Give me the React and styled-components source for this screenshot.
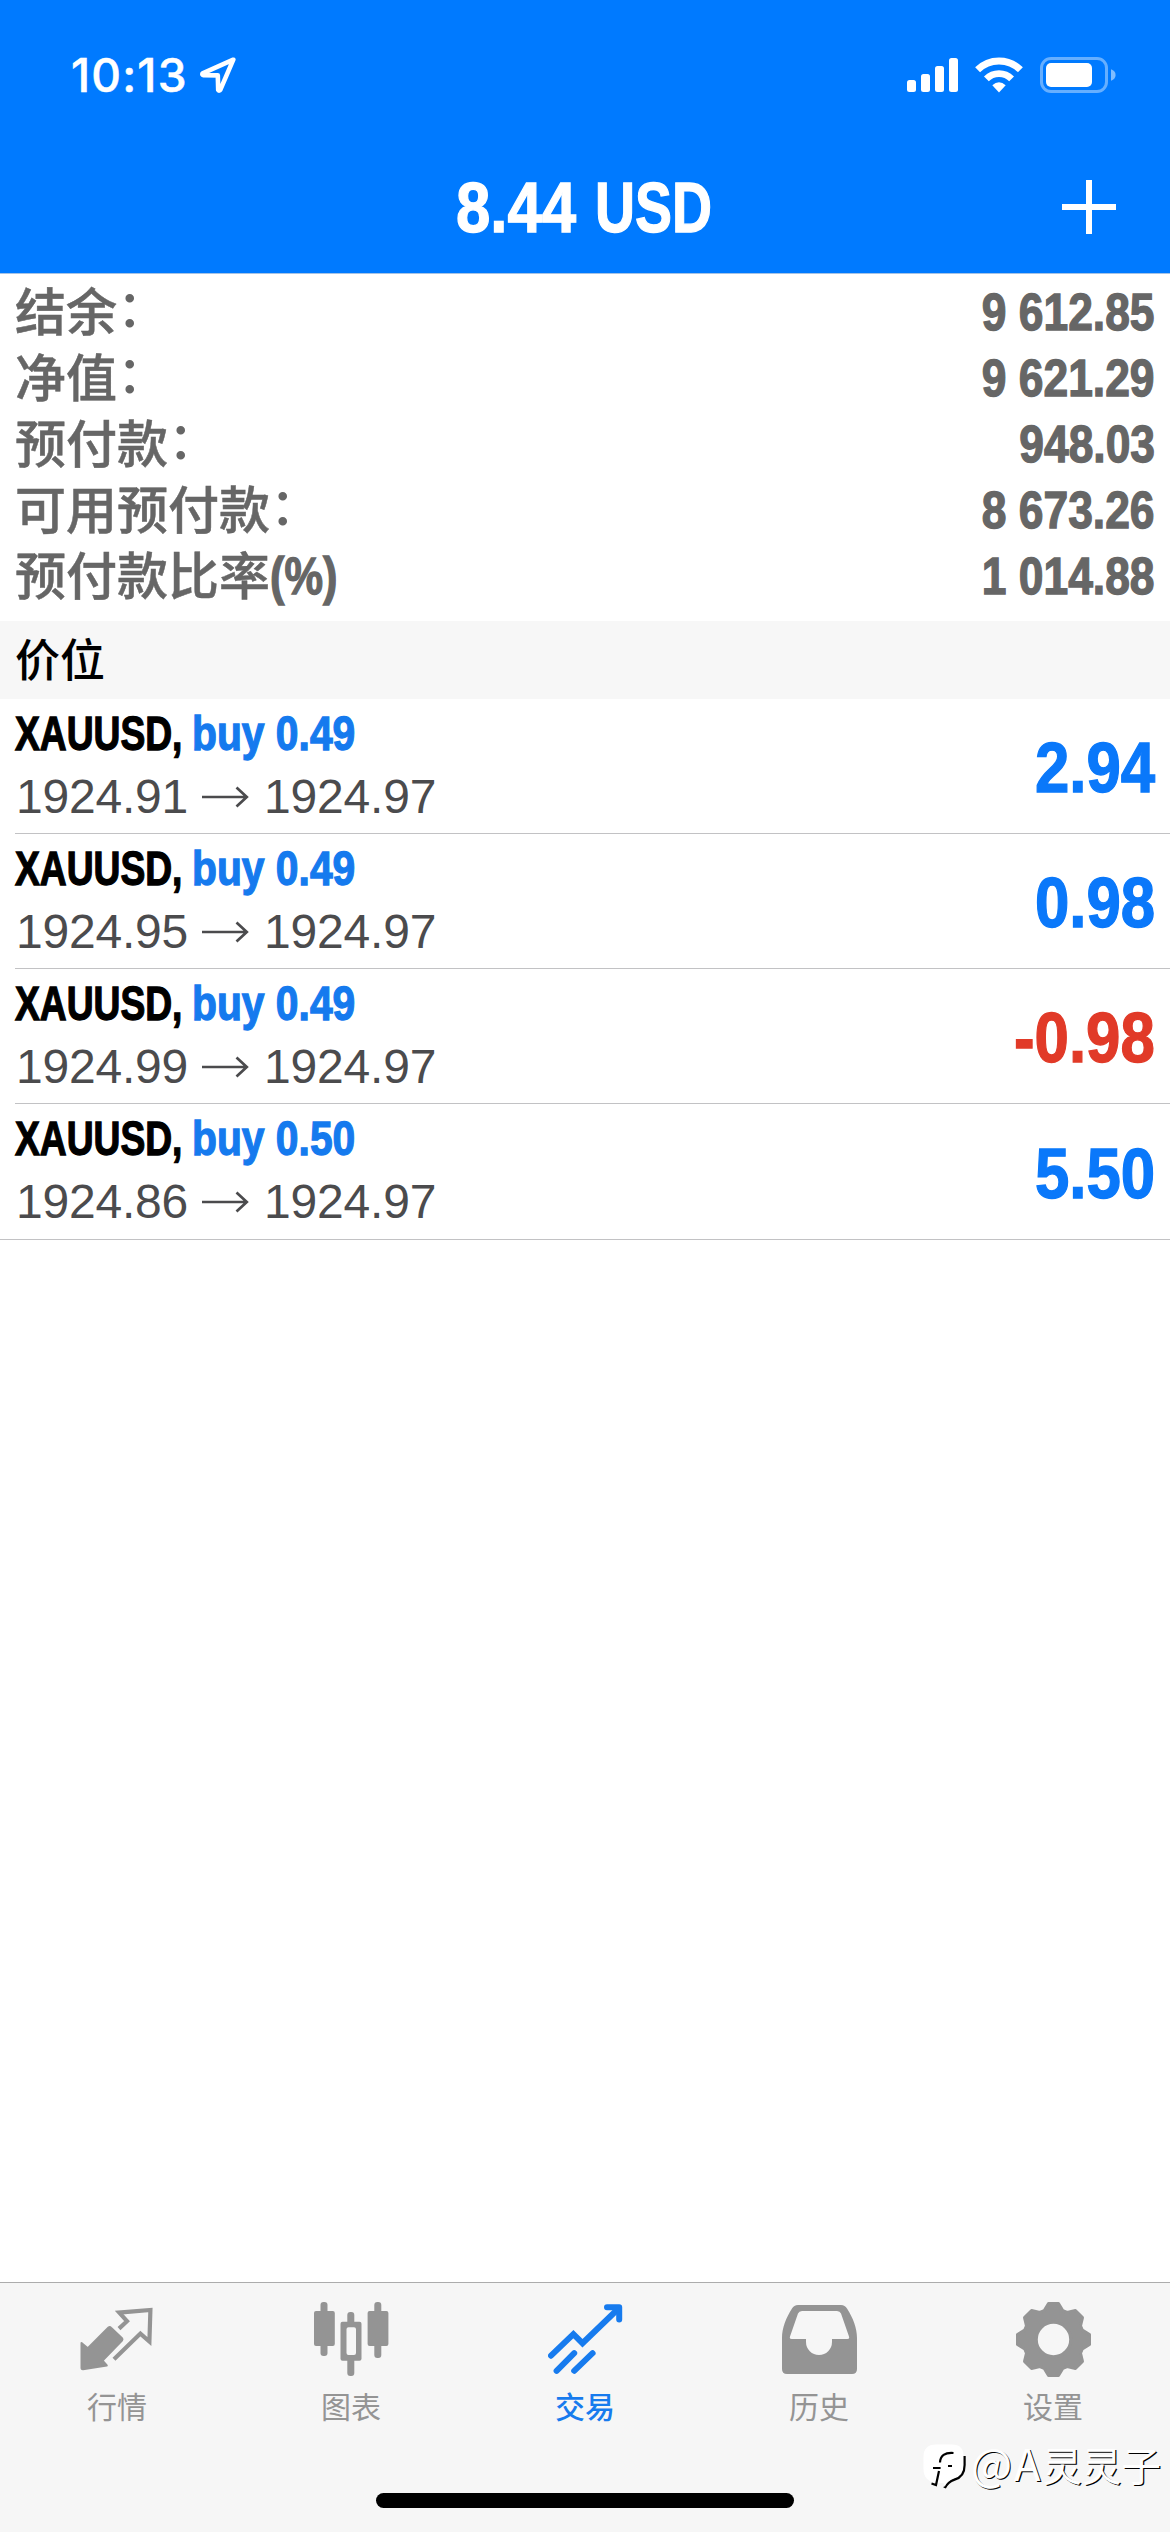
import React from 'react';
import styled, { createGlobalStyle } from 'styled-components';

const BLUE = '#007aff';
const CJK = '"Noto Sans CJK SC", "Noto Sans", sans-serif';
const LATIN = '"Liberation Sans", Arial, sans-serif';

const GlobalStyle = createGlobalStyle`
  * { box-sizing: border-box; }
  body { margin: 0; background: #fff; }
`;

const Screen = styled.div`
  position: relative;
  display: flex;
  flex-direction: column;
  width: 1170px;
  height: 2532px;
  overflow: hidden;
  background: #fff;
  font-family: ${LATIN};
`;

const Header = styled.header`
  background: ${BLUE};
  border-bottom: 1px solid #a5c3e6;
`;

const StatusBar = styled.div`
  display: flex;
  align-items: center;
  justify-content: space-between;
  height: 141px;
  padding: 8px 54px 0 71px;
`;

const StatusGroup = styled.div`
  display: flex;
  align-items: center;
  gap: ${(p) => p.$gap}px;
`;

const Clock = styled.span`
  width: 113px;
  color: #fff;
  font: 500 46px/50px Inter, sans-serif;
  letter-spacing: 1.2px;
  white-space: nowrap;
  -webkit-text-stroke: 0.5px currentColor;
`;

const NavBar = styled.div`
  display: grid;
  grid-template-columns: 1fr auto 1fr;
  align-items: center;
  height: 132px;
  padding-right: 54px;
  padding-left: 52px;
`;

const Title = styled.h1`
  display: flex;
  grid-column: 2;
  margin: 0;
  color: #fff;
  font-size: 71px;
  line-height: 80px;
`;

const AddButton = styled.button`
  display: flex;
  justify-self: end;
  padding: 0;
  border: 0;
  background: none;
`;

const Condensed = styled.span`
  display: inline-block;
  width: ${(p) => (p.$width ? `${p.$width}px` : 'auto')};
  font-family: ${LATIN};
  font-weight: 700;
  white-space: nowrap;
  -webkit-text-stroke: 1.3px currentColor;
  transform: translateY(1px) scaleX(${(p) => p.$scale || 0.87});
  transform-origin: ${(p) => p.$from || 'left'} center;
`;

const Summary = styled.section`
  height: 347px;
  padding: 5px 15px 0;
  color: #666;
`;

const SummaryRow = styled.div`
  display: flex;
  align-items: center;
  justify-content: space-between;
  height: 66px;
  font-size: 51px;
  line-height: 60px;
`;

const SummaryLabel = styled.div`
  display: flex;
  align-items: center;
`;

const LabelText = styled.span`
  padding-bottom: 6px;
  font-family: ${CJK};
  font-weight: 500;
  -webkit-text-stroke: 0.5px currentColor;
`;

const Colon = styled.span`
  padding-bottom: 15px;
  font-family: ${CJK};
  font-weight: 500;
  line-height: 42px;
`;

const SectionHeader = styled.h2`
  display: flex;
  align-items: center;
  height: 78px;
  margin: 0;
  padding: 0 15px 5px;
  background: #f7f7f7;
  color: #000;
  font: 500 45px/70px ${CJK};
`;

const Positions = styled.ul`
  flex: 1;
  margin: 0;
  padding: 0;
  list-style: none;
`;

const Position = styled.li`
  display: flex;
  justify-content: space-between;
  height: 135px;
  margin-left: 15px;
  padding-right: 15px;
  border-bottom: 1px solid #c2c2c4;

  &:last-child {
    height: 136px;
    margin-left: 0;
    padding-left: 15px;
  }
`;

const PositionInfo = styled.div`
  display: flex;
  flex-direction: column;
  padding-top: 2px;
`;

const Deal = styled.div`
  display: flex;
  height: 64px;
  color: #000;
  font-size: 48px;
  line-height: 64px;
`;

const Side = styled(Condensed)`
  color: #157aee;
`;

const Prices = styled.div`
  display: flex;
  align-items: center;
  height: 63px;
  padding-left: 1px;
  color: #4b4b4d;
  font-size: 48px;
  line-height: 63px;
  letter-spacing: -0.2px;
`;

const PriceArrow = styled.svg`
  margin: 0 14px;
`;

const Profit = styled(Condensed)`
  align-self: center;
  padding-top: 2px;
  color: ${(p) => (p.$loss ? '#e13a28' : '#0a78fa')};
  font-size: 71px;
  line-height: 80px;
`;

const TabBar = styled.footer`
  display: flex;
  flex-direction: column;
  align-items: center;
  height: 250px;
  padding-bottom: 24px;
  border-top: 1px solid #acacac;
  background: #f6f6f6;
`;

const Tabs = styled.nav`
  display: grid;
  grid-template-columns: repeat(5, 1fr);
  width: 100%;
`;

const Tab = styled.a`
  display: flex;
  flex-direction: column;
  align-items: center;
  padding-top: 19px;
  color: ${(p) => (p.$active ? '#177bee' : '#949494')};
`;

const TabLabel = styled.span`
  margin-top: 6px;
  font: ${(p) => (p.$active ? 500 : 400)} 30px/44px ${CJK};
`;

const HomeIndicator = styled.div`
  width: 418px;
  height: 15px;
  margin-top: auto;
  border-radius: 8px;
  background: #000;
`;

const Watermark = styled.div`
  position: absolute;
  right: 9px;
  bottom: 38px;
  display: flex;
  align-items: center;
  gap: 5px;
  color: #fff;
`;

const WatermarkText = styled.span`
  padding-bottom: 7px;
  font: 400 39.5px/46px ${CJK};
  text-shadow: 1.2px 1.2px 0 #000;
`;

const WatermarkHandle = styled.span`
  font-size: 43.5px;
  letter-spacing: 2px;
`;

const LocationIcon = () => (
  <svg width="36" height="36" viewBox="0 0 36 36" fill="none" stroke="#fff" strokeWidth="4.6" strokeLinejoin="round">
    <path d="M33.3 2.7 2.6 16.4Q1.8 18 3.4 18.2L17.8 18.4 18.2 33Q19.2 34.4 20.4 32.6Z" />
  </svg>
);

const SignalIcon = () => (
  <svg width="51" height="36" viewBox="0 0 51 36" fill="#fff">
    <rect x="0" y="23" width="9" height="12" rx="2.5" />
    <rect x="14" y="17" width="9" height="18" rx="2.5" />
    <rect x="28" y="9" width="9" height="26" rx="2.5" />
    <rect x="42" y="1" width="9" height="34" rx="2.5" />
  </svg>
);

const WifiIcon = () => (
  <svg width="48" height="36" viewBox="0 0 48 36" fill="none" stroke="#fff">
    <path d="M2.6 12.8A30.4 30.4 0 0 1 45.4 12.8" strokeWidth="7" />
    <path d="M11.4 21.8A17.8 17.8 0 0 1 36.6 21.8" strokeWidth="6.8" />
    <path d="M17.3 28.2Q24 22.4 30.7 28.2L24 35.6Z" fill="#fff" stroke="none" />
  </svg>
);

const BatteryIcon = () => (
  <svg width="76" height="36" viewBox="0 0 76 36">
    <rect x="1.5" y="1.5" width="65" height="33" rx="9.5" fill="none" stroke="#fff" strokeOpacity="0.4" strokeWidth="3" />
    <rect x="6" y="6" width="46" height="24" rx="5" fill="#fff" />
    <path d="M71 12.3Q75.6 14 75.6 18T71 23.7Z" fill="#fff" fillOpacity="0.5" />
  </svg>
);

const PlusIcon = () => (
  <svg width="54" height="54" viewBox="0 0 54 54" stroke="#fff" strokeWidth="6">
    <path d="M27 0V54M0 27H54" />
  </svg>
);

const QuotesIcon = () => (
  <svg width="75" height="75" viewBox="0 0 75 75" fill="currentColor">
    <path
      d="M1.5 41 7.8 46.3 28.5 25.5Q29.8 24.5 31 25.7L42 36.2Q43 37.4 42 38.6L22.6 58.6 26.8 63.4 3 67.2Q1.5 67.3 1.5 66Z"
      stroke="currentColor"
      strokeWidth="2"
      strokeLinejoin="round"
    />
    <path d="M39 26.6 47 19.2 39.2 10.6 70.4 8 69.4 39.5 60.4 31.6 34 57.2" fill="none" stroke="currentColor" strokeWidth="4.2" />
  </svg>
);

const ChartIcon = () => (
  <svg width="75" height="75" viewBox="0 0 75 75" fill="currentColor">
    <rect x="6.5" y="0" width="7" height="54" rx="3" />
    <rect x="0" y="9" width="20.8" height="35" rx="2" />
    <rect x="33.3" y="10" width="7" height="14" rx="3" />
    <rect x="33.3" y="55" width="7" height="19" rx="3" />
    <path
      fillRule="evenodd"
      d="M28.5 19.7H45.5Q47.5 19.7 47.5 21.7V56.7Q47.5 58.7 45.5 58.7H28.5Q26.5 58.7 26.5 56.7V21.7Q26.5 19.7 28.5 19.7ZM34.5 25.3Q32.5 25.3 32.5 27.3V51Q32.5 53 34.5 53H40Q42 53 42 51V27.3Q42 25.3 40 25.3Z"
    />
    <rect x="60.3" y="0" width="7" height="56" rx="3" />
    <rect x="53.6" y="9" width="20.8" height="35" rx="2" />
  </svg>
);

const TradeIcon = () => (
  <svg
    width="75"
    height="75"
    viewBox="0 0 75 75"
    fill="none"
    stroke="currentColor"
    strokeWidth="6"
    strokeLinecap="round"
  >
    <path d="M3 53.7 25.4 32.2 34.5 41.2 70 7" strokeLinejoin="miter" />
    <path d="M59 5.2H71.2V17.5" strokeLinejoin="round" />
    <path d="M8.6 68.8 26.2 51.2M26.2 68.8 44.6 51.2" />
  </svg>
);

const HistoryIcon = () => (
  <svg width="75" height="75" viewBox="0 0 75 75" fill="currentColor">
    <path
      fillRule="evenodd"
      d="M16 3H59Q63 3 65 6.5C71 16 75 26 75 36V67Q75 72 70 72H5Q0 72 0 67V36C0 26 4 16 10 6.5Q12 3 16 3ZM20 9Q17 9 16 11.5L8 34.5Q7.2 37 9.7 37H24V40A13 13 0 0 0 50 40V37H65.3Q67.8 37 67 34.5L59 11.5Q58 9 55 9Z"
    />
  </svg>
);

const TOOTH = [[-9.4, -28.8], [-5, -36], [5, -36], [9.4, -28.8]];
const GEAR_POINTS = Array.from({ length: 8 }, (_, i) => {
  const a = (i * Math.PI) / 4;
  return TOOTH.map(([x, y]) =>
    [37.5 + x * Math.cos(a) - y * Math.sin(a), 37.5 + x * Math.sin(a) + y * Math.cos(a)]
      .map((n) => n.toFixed(2))
      .join(' ')
  ).join('L');
}).join('L');

const SettingsIcon = () => (
  <svg width="75" height="75" viewBox="0 0 75 75" fill="currentColor" stroke="currentColor" strokeWidth="3" strokeLinejoin="round">
    <path fillRule="evenodd" d={`M${GEAR_POINTS}ZM20.3 37.5a17.2 17.2 0 1 0 34.4 0a17.2 17.2 0 1 0 -34.4 0Z`} />
  </svg>
);

const BUBBLE = 'M13 0.5H29Q40.5 0.5 40.5 12V21Q40.5 32 31 34.5Q24 37 21.5 43L20.5 39H13Q0.5 37 0.5 25V13Q0.5 0.5 13 0.5Z';

const BubbleLogo = () => (
  <svg width="43" height="47" viewBox="0 0 43 47" fill="none">
    <path
      d="M41.3 12V21Q41.3 32.6 31.5 35.3Q24.5 37.5 21.6 44"
      stroke="#000"
      strokeWidth="2.8"
    />
    <path d={BUBBLE} fill="#fff" />
    <path d="M30.5 9Q17.5 8 17 18.5M10 24H17.6M16 27 13 41L8.5 39.5M25 22H29" stroke="#000" strokeWidth="2.2" />
  </svg>
);

const summary = [
  { label: '结余', colon: true, value: '9 612.85' },
  { label: '净值', colon: true, value: '9 621.29' },
  { label: '预付款', colon: true, value: '948.03' },
  { label: '可用预付款', colon: true, value: '8 673.26' },
  { label: '预付款比率', unit: '(%)', value: '1 014.88' },
];

const positions = [
  { volume: '0.49', open: '1924.91', current: '1924.97', profit: '2.94' },
  { volume: '0.49', open: '1924.95', current: '1924.97', profit: '0.98' },
  { volume: '0.49', open: '1924.99', current: '1924.97', profit: '-0.98' },
  { volume: '0.50', open: '1924.86', current: '1924.97', profit: '5.50' },
];

const tabs = [
  { label: '行情', Icon: QuotesIcon },
  { label: '图表', Icon: ChartIcon },
  { label: '交易', Icon: TradeIcon, active: true },
  { label: '历史', Icon: HistoryIcon },
  { label: '设置', Icon: SettingsIcon },
];

export default function App() {
  return (
    <Screen>
      <GlobalStyle />
      <Header>
        <StatusBar>
          <StatusGroup $gap={16}>
            <Clock>10:13</Clock>
            <LocationIcon />
          </StatusGroup>
          <StatusGroup $gap={17}>
            <SignalIcon />
            <WifiIcon />
            <BatteryIcon />
          </StatusGroup>
        </StatusBar>
        <NavBar>
          <Title>
            <Condensed $width={139} $scale={0.87}>8.44</Condensed>
            <Condensed $width={117} $scale={0.78}>USD</Condensed>
          </Title>
          <AddButton aria-label="+">
            <PlusIcon />
          </AddButton>
        </NavBar>
      </Header>

      <Summary>
        {summary.map((row) => (
          <SummaryRow key={row.label}>
            <SummaryLabel>
              <LabelText>{row.label}</LabelText>
              {row.colon && <Colon>：</Colon>}
              {row.unit && <Condensed $scale={0.85}>{row.unit}</Condensed>}
            </SummaryLabel>
            <Condensed $from="right">{row.value}</Condensed>
          </SummaryRow>
        ))}
      </Summary>

      <SectionHeader>价位</SectionHeader>

      <Positions>
        {positions.map((p) => (
          <Position key={p.open}>
            <PositionInfo>
              <Deal>
                <Condensed $width={177} $scale={0.775}>XAUUSD,</Condensed>
                <Side $scale={0.85}>buy {p.volume}</Side>
              </Deal>
              <Prices>
                {p.open}
                <PriceArrow width="48" height="24" viewBox="0 0 48 24" fill="none" stroke="currentColor" strokeWidth="2.7">
                  <path d="M0 12H45M34.5 2.4L44.8 12L34.5 21.6" />
                </PriceArrow>
                {p.current}
              </Prices>
            </PositionInfo>
            <Profit $from="right" $loss={p.profit.startsWith('-')}>{p.profit}</Profit>
          </Position>
        ))}
      </Positions>

      <TabBar>
        <Tabs>
          {tabs.map(({ label, Icon, active }) => (
            <Tab key={label} $active={active}>
              <Icon />
              <TabLabel $active={active}>{label}</TabLabel>
            </Tab>
          ))}
        </Tabs>
        <HomeIndicator />
      </TabBar>

      <Watermark>
        <BubbleLogo />
        <WatermarkText>
          <WatermarkHandle>@A</WatermarkHandle>灵灵子
        </WatermarkText>
      </Watermark>
    </Screen>
  );
}
